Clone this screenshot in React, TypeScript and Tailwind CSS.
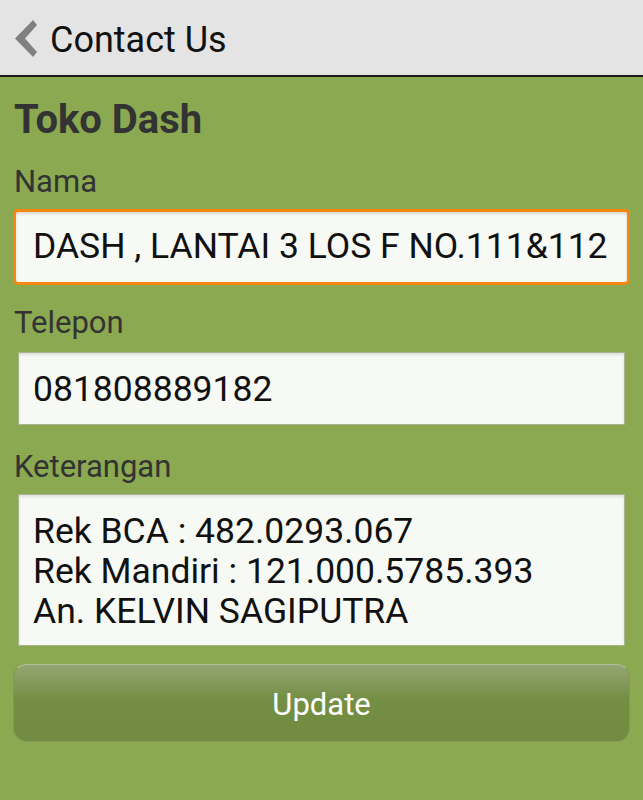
import React from 'react';

const App = () => {
  return (
    <div className="w-[643px] h-[800px] bg-[#8ba950] font-['Roboto',sans-serif] flex flex-col">
      <header className="h-[77px] bg-[#e4e4e4] border-b-2 border-[#1a1a1a] flex items-center pl-[14px] shrink-0">
        <svg width="24" height="40" viewBox="0 0 24 40" className="mr-[12px] mt-[2px]">
          <polygon points="19,1 23,6 11,19.5 23,33 19,38 1,19.5" fill="#808080" />
        </svg>
        <span className="text-[36px] text-[#111] leading-none mt-[4px]">Contact Us</span>
      </header>

      <main className="flex flex-col px-[13px] pt-[23px]">
        <h1 className="text-[40px] font-bold text-[#333] leading-none pl-[1px]">Toko Dash</h1>

        <label className="text-[31px] text-[#333] leading-none mt-[26px] pl-[1px]">Nama</label>
        <div className="mt-[12px] h-[76px] rounded-[5px] border-[3px] border-[#f3870f] bg-[#f7f9f4] shadow-[inset_0_2px_3px_rgba(0,0,0,0.12)] flex items-center pl-[17px] overflow-hidden">
          <span className="text-[35.5px] text-[#111] whitespace-nowrap">DASH , LANTAI 3 LOS F NO.111&amp;112</span>
        </div>

        <label className="text-[31px] text-[#333] leading-none mt-[22px] pl-[1px]">Telepon</label>
        <div className="mt-[14px] mx-[5px] h-[73px] border border-[#a9b38f] bg-[#f7f9f4] shadow-[inset_0_2px_3px_rgba(0,0,0,0.1)] flex items-center pl-[14px] pt-[2px]">
          <span className="text-[35.5px] text-[#111]">081808889182</span>
        </div>

        <label className="text-[31px] text-[#333] leading-none mt-[26px] pl-[1px]">Keterangan</label>
        <div className="mt-[12px] mx-[5px] h-[152px] border border-[#a9b38f] bg-[#f7f9f4] shadow-[inset_0_2px_3px_rgba(0,0,0,0.1)] pl-[14px] pt-[16px]">
          <p className="text-[35.5px] text-[#111] leading-[40px]">
            Rek BCA : 482.0293.067
            <br />
            Rek Mandiri : 121.000.5785.393
            <br />
            An. KELVIN SAGIPUTRA
          </p>
        </div>

        <button className="mt-[18px] h-[78px] rounded-[14px] bg-gradient-to-b from-[#94a672] via-[#748e44] via-45% to-[#718c41] border border-[#82995a] border-t-[#b0bd98] text-white text-[31px] flex items-center justify-center pt-[5px]">
          Update
        </button>
      </main>
    </div>
  );
};

export default App;
